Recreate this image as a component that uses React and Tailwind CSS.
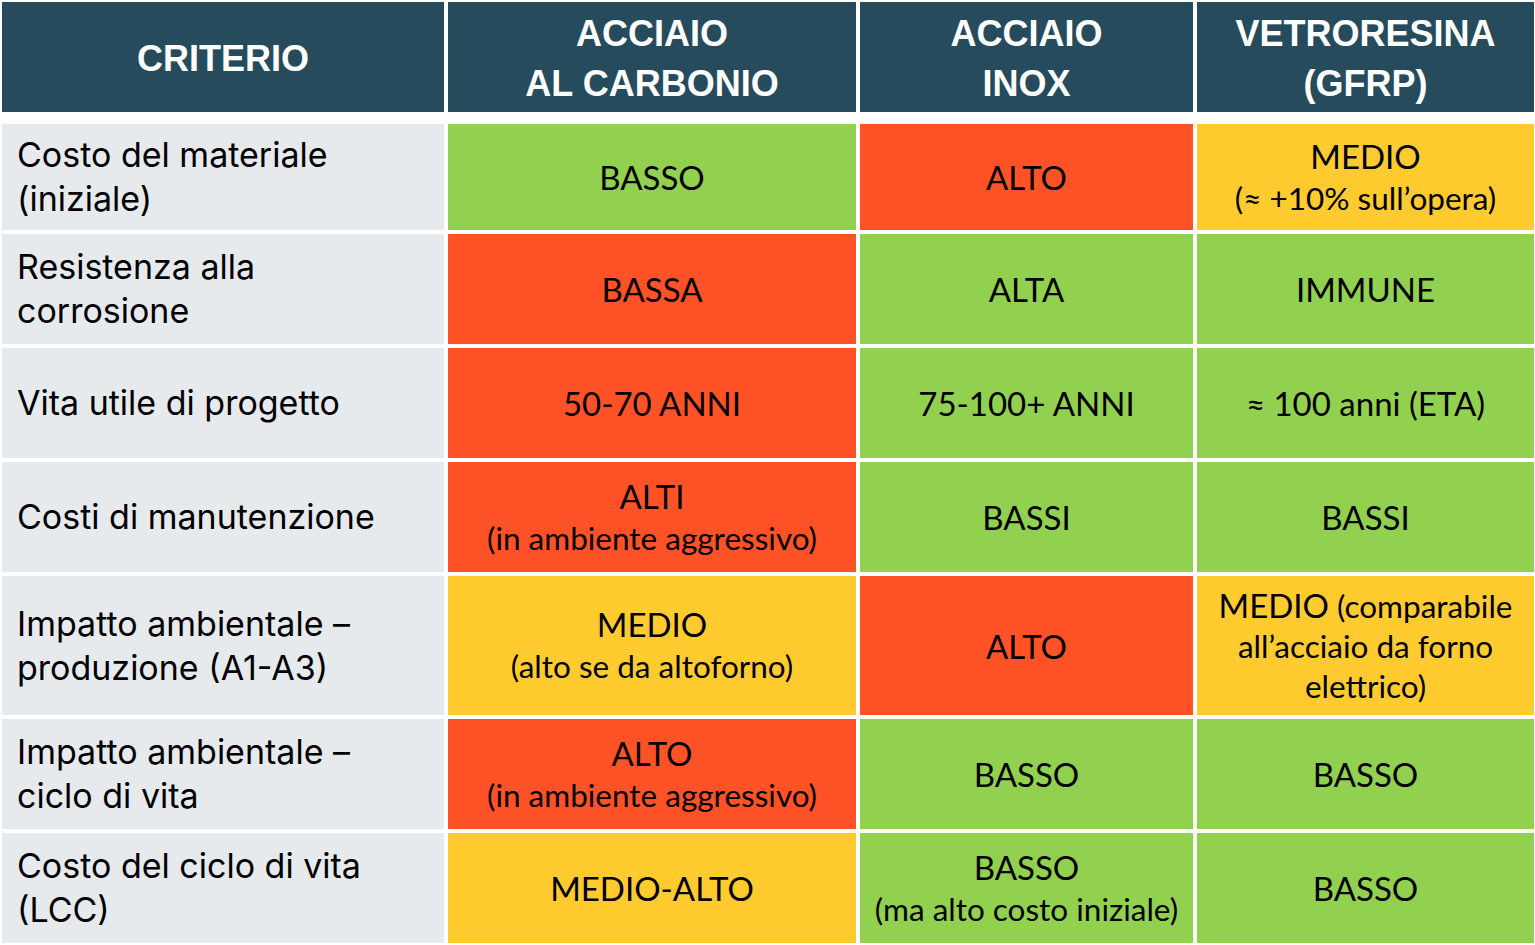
import React from "react";

const G = "bg-[#92d050]";
const R = "bg-[#ff5226]";
const Y = "bg-[#ffcb2f]";

const rows = [
  { h: "h-[106px]", crit: ["Costo del materiale", "(iniziale)"], cells: [
    { c: G, main: "BASSO" }, { c: R, main: "ALTO" }, { c: Y, main: "MEDIO", sub: "(≈ +10% sull’opera)" } ] },
  { h: "h-[110px]", crit: ["Resistenza alla", "corrosione"], cells: [
    { c: R, main: "BASSA" }, { c: G, main: "ALTA" }, { c: G, main: "IMMUNE" } ] },
  { h: "h-[110px]", crit: ["Vita utile di progetto"], cells: [
    { c: R, main: "50-70 ANNI" }, { c: G, main: "75-100+ ANNI" }, { c: G, main: "≈ 100 anni (ETA)" } ] },
  { h: "h-[110px]", crit: ["Costi di manutenzione"], cells: [
    { c: R, main: "ALTI", sub: "(in ambiente aggressivo)" }, { c: G, main: "BASSI" }, { c: G, main: "BASSI" } ] },
  { h: "h-[139px]", crit: ["Impatto ambientale –", "produzione (A1-A3)"], cells: [
    { c: Y, main: "MEDIO", sub: "(alto se da altoforno)" }, { c: R, main: "ALTO" }, { c: Y, special: true } ] },
  { h: "h-[110px]", crit: ["Impatto ambientale –", "ciclo di vita"], cells: [
    { c: R, main: "ALTO", sub: "(in ambiente aggressivo)" }, { c: G, main: "BASSO" }, { c: G, main: "BASSO" } ] },
  { h: "h-[110px]", crit: ["Costo del ciclo di vita", "(LCC)"], cells: [
    { c: Y, main: "MEDIO-ALTO" }, { c: G, main: "BASSO", sub: "(ma alto costo iniziale)" }, { c: G, main: "BASSO" } ] },
];

const cellFont = { fontFamily: "Lato, 'Open Sans', sans-serif" };

function Cell({ cell }) {
  if (cell.special) {
    return (
      <div className={`${cell.c} flex flex-col items-center justify-center text-center text-black leading-[40px]`} style={cellFont}>
        <div className="text-[31.5px]"><span className="text-[33px]">MEDIO</span> (comparabile</div>
        <div className="text-[31.5px]">all’acciaio da forno</div>
        <div className="text-[31.5px]">elettrico)</div>
      </div>
    );
  }
  return (
    <div className={`${cell.c} flex flex-col items-center justify-center text-center text-black`} style={cellFont}>
      <div className="text-[33px] leading-[42px]">{cell.main}</div>
      {cell.sub && <div className="text-[31.5px] leading-[43px]">{cell.sub}</div>}
    </div>
  );
}

export default function App() {
  return (
    <div className="w-[1535px] h-[945px] bg-white pt-[2px] px-[2px]">
      <div className="grid grid-cols-[442px_408px_333px_337px] gap-x-[4px]">
        <div className="h-[110px] bg-[#254b5c] flex items-center justify-center pt-[4px] text-white font-bold text-[36px]" style={{ fontFamily: "'Liberation Sans', Arial, sans-serif" }}>CRITERIO</div>
        {[["ACCIAIO", "AL CARBONIO"], ["ACCIAIO", "INOX"], ["VETRORESINA", "(GFRP)"]].map((l, i) => (
          <div key={i} className="h-[110px] bg-[#254b5c] flex flex-col items-center justify-center pt-[4px] text-white font-bold text-[36px] leading-[50px]" style={{ fontFamily: "'Liberation Sans', Arial, sans-serif" }}>
            <div>{l[0]}</div>
            <div>{l[1]}</div>
          </div>
        ))}
      </div>
      <div className="grid grid-cols-[442px_408px_333px_337px] gap-[4px] mt-[12px]">
        {rows.map((r, i) => (
          <React.Fragment key={i}>
            <div className={`${r.h} bg-[#e7eaed] flex flex-col justify-center pl-[15px] text-black text-[34px] leading-[44px]`} style={{ fontFamily: "Inter, 'Noto Sans', sans-serif" }}>
              {r.crit.map((t, j) => <div key={j}>{t}</div>)}
            </div>
            {r.cells.map((c, j) => <Cell key={j} cell={c} />)}
          </React.Fragment>
        ))}
      </div>
    </div>
  );
}
